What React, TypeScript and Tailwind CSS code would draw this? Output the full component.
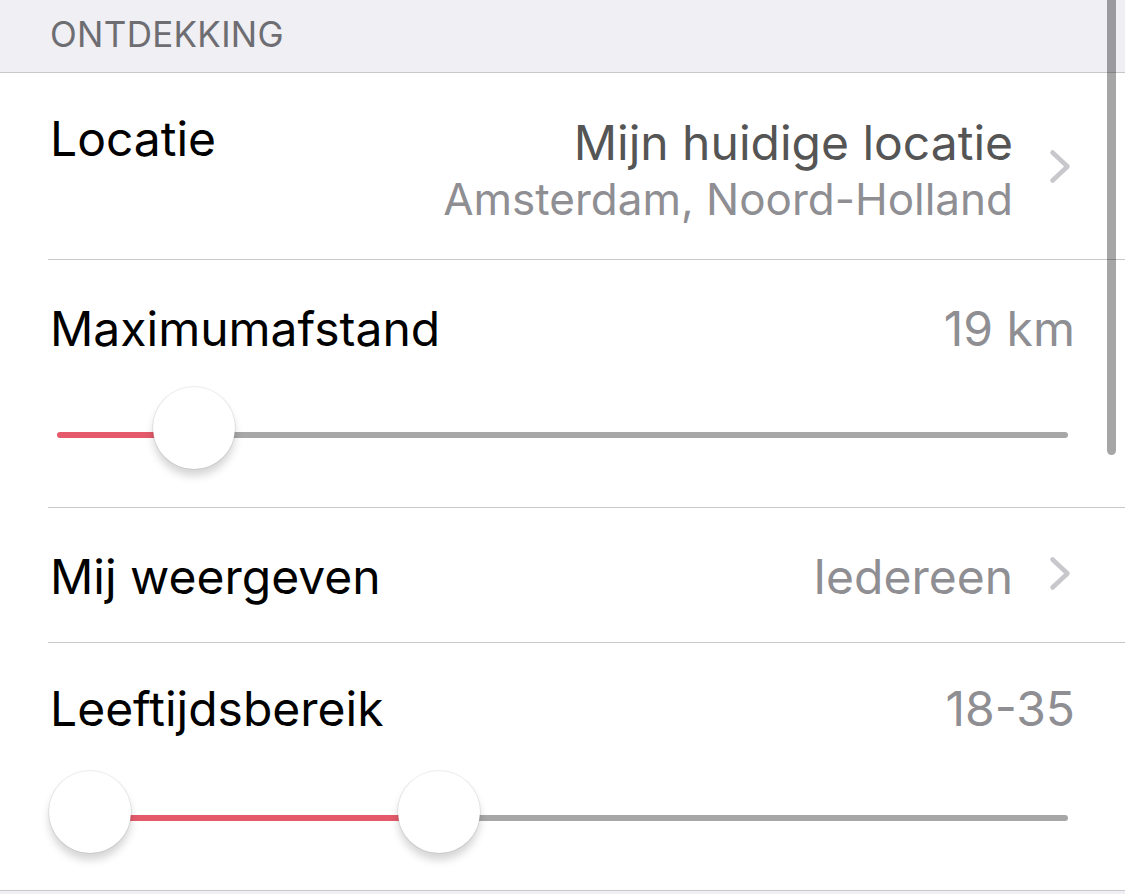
import React from "react";

const FONT = { fontFamily: "Inter, 'Liberation Sans', sans-serif" };

function Chevron() {
  return (
    <svg width="22" height="35" viewBox="0 0 22 35" fill="none">
      <path
        d="M3.5 3.5 L18.5 17.5 L3.5 31.5"
        stroke="#c7c7cc"
        strokeWidth="4.5"
        strokeLinecap="round"
        strokeLinejoin="round"
      />
    </svg>
  );
}

function Thumb({ left }: { left: number }) {
  return (
    <div
      className="absolute top-0 h-[82px] w-[82px] rounded-full bg-white shadow-[0_7px_8px_rgba(0,0,0,0.17),0_0_0_1px_rgba(0,0,0,0.07)]"
      style={{ left }}
    />
  );
}

// Track segments: red between [redFrom, redTo], grey from redTo to the end.
function Slider({ redFrom, redTo, thumbs, top }: { redFrom: number; redTo: number; thumbs: number[]; top: number }) {
  return (
    <div className="relative h-[82px]">
      <div
        className="absolute h-[6px] rounded-full bg-[#a7a7a7]"
        style={{ top, left: redTo, right: 7 }}
      />
      <div
        className="absolute h-[6px] rounded-full bg-[#e45a6b]"
        style={{ top, left: redFrom, width: redTo - redFrom }}
      />
      {thumbs.map((t) => (
        <Thumb key={t} left={t} />
      ))}
    </div>
  );
}

export default function App() {
  return (
    <div className="relative h-[894px] w-[1125px] overflow-hidden bg-[#efeff4]" style={FONT}>
      {/* Section header */}
      <div className="h-[73px] border-b border-[#c8c7cc] pl-[50px] pt-[13px] text-[35px] leading-[42px] tracking-[0.3px] text-[#6d6d72]">
        ONTDEKKING
      </div>

      <div className="border-b border-[#c8c7cc] bg-white">
        {/* Locatie */}
        <div className="pl-[48px]">
          <div className="flex h-[187px] items-start border-b border-[#c8c7cc] pl-[2px] pr-[54px]">
            <div className="pt-[38px] text-[48px] leading-[56px] text-black">Locatie</div>
            <div className="ml-auto pt-[42px] text-right">
              <div className="text-[48px] leading-[56px] text-[#555555]">Mijn huidige locatie</div>
              <div className="text-[44px] leading-[56px] text-[#8e8e93]">Amsterdam, Noord-Holland</div>
            </div>
            <div className="ml-[36px] self-center">
              <Chevron />
            </div>
          </div>
        </div>

        {/* Maximumafstand */}
        <div className="pl-[48px]">
          <div className="h-[248px] border-b border-[#c8c7cc] pl-[2px] pr-[50px] pt-[41px]">
            <div className="flex text-[48px] leading-[56px]">
              <span className="text-black">Maximumafstand</span>
              <span className="ml-auto text-[#8e8e93]">19 km</span>
            </div>
            <div className="mt-[30px]">
              <Slider redFrom={7} redTo={143} thumbs={[103]} top={45} />
            </div>
          </div>
        </div>

        {/* Mij weergeven */}
        <div className="pl-[48px]">
          <div className="flex h-[135px] items-start border-b border-[#c8c7cc] pl-[2px] pr-[54px] pt-[41px]">
            <span className="text-[48px] leading-[56px] text-black">Mij weergeven</span>
            <span className="ml-auto text-[48px] leading-[56px] text-[#8e8e93]">Iedereen</span>
            <div className="ml-[36px] mt-[7px]">
              <Chevron />
            </div>
          </div>
        </div>

        {/* Leeftijdsbereik */}
        <div className="h-[247px] pl-[50px] pr-[50px] pt-[38px]">
          <div className="flex text-[48px] leading-[56px]">
            <span className="text-black">Leeftijdsbereik</span>
            <span className="ml-auto text-[#8e8e93]">18-35</span>
          </div>
          <div className="mt-[34px]">
            <Slider redFrom={40} redTo={389} thumbs={[-1, 348]} top={44} />
          </div>
        </div>
      </div>

      {/* Scroll indicator */}
      <div className="absolute right-[9px] top-0 h-[455px] w-[9px] rounded-b-full bg-black/35" />
    </div>
  );
}
